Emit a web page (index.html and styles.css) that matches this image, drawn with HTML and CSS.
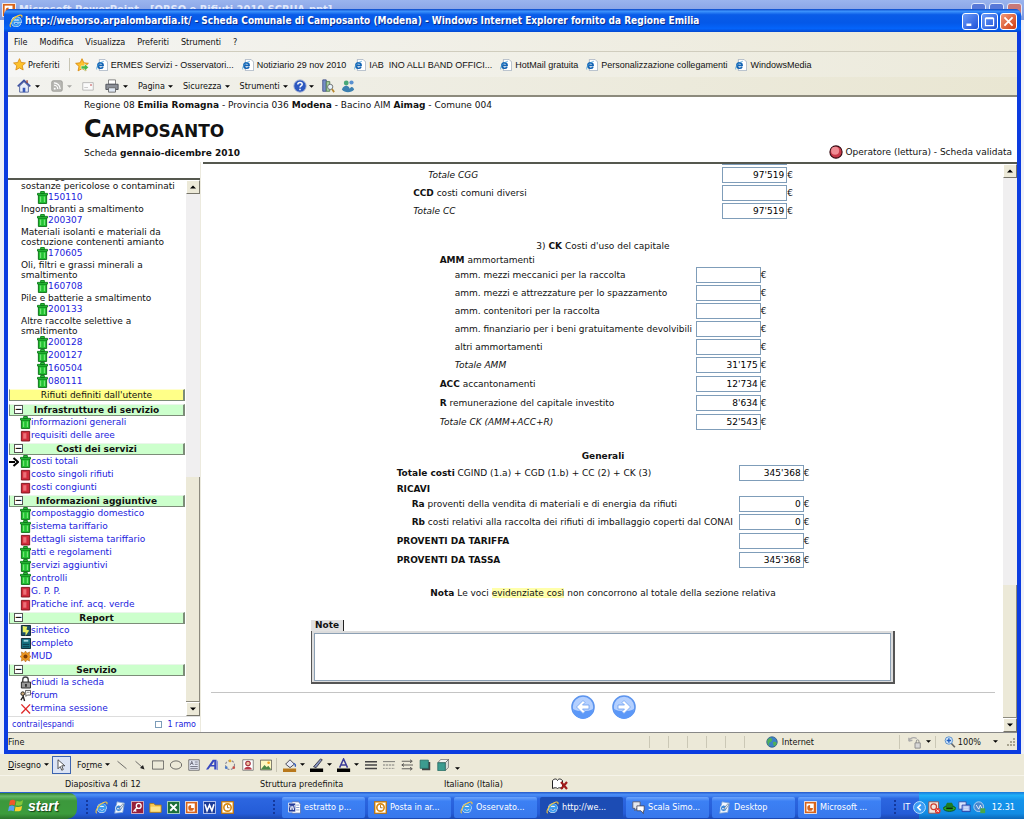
FILE: index.html
```html
<!DOCTYPE html>
<html lang="it">
<head>
<meta charset="utf-8">
<title>Scheda Comunale di Camposanto (Modena)</title>
<link rel="stylesheet" href="styles.css">
</head>
<body>
<svg class="defs" aria-hidden="true">
  <symbol id="ie" viewBox="0 0 16 16"><path d="M4.500 8.500h8.300c0-5-8.600-5.500-8.600.5 0 5 6.500 5.200 8.200 1.500" fill="none" stroke="#fff" stroke-width="3.400"/><path d="M4.500 8.500h8.300c0-5-8.600-5.500-8.600.5 0 5 6.500 5.200 8.200 1.500" fill="none" stroke="#3c9cf0" stroke-width="2.400"/><path d="M2 15C-1 13 5 3 12.500 1.300c2.500-.3 2.700.8 2 2.700" fill="none" stroke="#f8c838" stroke-width="1.300"/></symbol>
  <symbol id="iepage" viewBox="0 0 16 16"><path d="M4.500.5h7.500l3.500 3.500v11.500h-11z" fill="#fff" stroke="#9aa7b8"/><path d="M3 8.500h6.500c0-4.500-7-4.500-7 .5 0 4 5.500 4.200 6.800 1.500" fill="none" stroke="#1464b4" stroke-width="2.200"/><path d="M1 14C-.5 11 5 4 10.500 3" fill="none" stroke="#4aa0d8"/></symbol>
  <symbol id="star" viewBox="0 0 16 16"><path d="M8 .8l2.100 4.700 5.200.6-3.900 3.500 1.100 5.100L8 12.200l-4.500 2.500 1.100-5.100L.7 6.100l5.200-.6z" fill="#fdc22d" stroke="#d98a10"/></symbol>
  <symbol id="caret" viewBox="0 0 8 8"><path d="M0 2h8L4 6z" fill="#000"/></symbol>
  <symbol id="bin" viewBox="0 0 12 14"><path d="M1.500 4h9v9.500h-9z" fill="#22c232" stroke="#0a6a14"/><path d="M.5 2.500h11v1.800H.5zM4 .5h4v2H4z" fill="#3ada48" stroke="#0a7a18"/><path d="M4 6v6M8 6v6" stroke="#8df08d"/></symbol>
  <symbol id="redbin" viewBox="0 0 12 14"><path d="M1.500 2.500h9v10.500h-9z" fill="#d02c3c" stroke="#7c1018"/><path d="M3.500 4.500h3.500v6H3.500z" fill="#ec7078"/></symbol>
  <symbol id="ppt" viewBox="0 0 16 16"><path d="M.5.5h15v15H.5z" fill="#d8641c" stroke="#fff"/><path d="M3 3h9v10H3z" fill="#fff"/><path d="M7.500 5v3.500H11A3.500 3.500 0 1 1 7.500 5z" fill="#d8641c"/></symbol>
  <symbol id="outlook" viewBox="0 0 16 16"><path d="M.5.5h15v15H.5z" fill="#f0a830" stroke="#b86c08"/><path d="M2 2h12v12H2z" fill="#fff"/><circle cx="8" cy="8" r="4.500" fill="#fff" stroke="#d88810" stroke-width="2"/><path d="M8 5v3.300h2.500" fill="none" stroke="#a05c00"/></symbol>
  <symbol id="word" viewBox="0 0 16 16"><path d="M.5.5h15v15H.5z" fill="#1c3c98" stroke="#dfe6ff"/><path d="M2.500 4l2.500 8 3-7 3 7 2.500-8" fill="none" stroke="#fff" stroke-width="2"/></symbol>
  <symbol id="wordpage" viewBox="0 0 16 16"><path d="M5 1h8l2.500 3v11H5z" fill="#fff" stroke="#5068a8"/><path d="M9 5h5M9 8h5M9 11h5" stroke="#7088c0"/><path d="M.5 2.500h9v11h-9z" fill="#243c98" stroke="#fff"/><path d="M2 5l1.500 6L5 6l1.500 5L8 5" fill="none" stroke="#fff"/></symbol>
  <symbol id="desk" viewBox="0 0 16 16"><path d="M5 1l9 1.500L12 14l-10 1z" fill="#f4f8ff" stroke="#7aa0d0"/><circle cx="7" cy="9" r="4" fill="#3c88d8" stroke="#fff"/><path d="M5 9.500h4.500" stroke="#fff" stroke-width="1.200"/><path d="M7.500 9L12 3.500l1.500 1L9.500 10z" fill="#e8f0fa" stroke="#385880" stroke-width=".7"/></symbol>
  <symbol id="chat" viewBox="0 0 16 16"><path d="M1 1h9v8H6l-2.500 3V9H1z" fill="#e4e8ee" stroke="#556"/><path d="M6 6h9v6h-1v3.500L11 12H6z" fill="#fff" stroke="#445"/></symbol>
  <symbol id="arrowball" viewBox="0 0 24 24"><circle cx="12" cy="12" r="11" fill="#b4d0ff" stroke="#5c94ee" stroke-width="1.600"/><path d="M2 14a10 10 0 0 0 20 0c-5 3-15 3-20 0z" fill="#5c98f8"/><path d="M5.500 12l6.500-6.500 2 2L11.500 10H18v4h-6.500l2.500 2.500-2 2z" fill="#fff" stroke="#6da0f0" stroke-width=".8"/></symbol>
</svg>

<div class="desktop">
  <div class="workspace">
    <div class="back-title"><svg class="ico14"><use href="#ppt"/></svg><span>Microsoft PowerPoint - [ORSO e Rifiuti 2010 SCRUA.ppt]</span>
      <i class="bk"></i><i class="bk"></i><i class="bk bk-x"></i></div>

    <section class="window">
      <header class="titlebar">
        <svg class="ico14"><use href="#ie"/></svg>
        <h1>http://weborso.arpalombardia.it/ - Scheda Comunale di Camposanto (Modena) - Windows Internet Explorer fornito da Regione Emilia</h1>
        <button class="wb" aria-label="Riduci"><svg viewBox="0 0 16 16"><path d="M3 12h6" stroke="#fff" stroke-width="3"/></svg></button>
        <button class="wb" aria-label="Ingrandisci"><svg viewBox="0 0 16 16"><path d="M3 4.500h10V13H3zM3 3.500h10" fill="none" stroke="#fff" stroke-width="1.500"/></svg></button>
        <button class="wb close" aria-label="Chiudi"><svg viewBox="0 0 16 16"><path d="M3 3l10 10M13 3L3 13" stroke="#fff" stroke-width="2.200"/></svg></button>
      </header>

      <nav class="menubar">
        <button>File</button><button>Modifica</button><button>Visualizza</button><button>Preferiti</button><button>Strumenti</button><button>?</button>
      </nav>

      <nav class="favbar">
        <button class="fav-main"><svg class="ico13"><use href="#star"/></svg>Preferiti</button>
        <button class="fav-add" aria-label="Aggiungi a Preferiti"><svg class="ico14" viewBox="0 0 16 16"><use href="#star"/><path d="M7 9h4V6.500l4.500 4.200L11 15v-2.500H7z" fill="#48b848" stroke="#fff" stroke-width=".6"/></svg></button>
        <a href="#"><svg class="ico12"><use href="#iepage"/></svg>ERMES Servizi - Osservatori...</a>
        <a href="#"><svg class="ico12"><use href="#iepage"/></svg>Notiziario 29 nov 2010</a>
        <a href="#"><svg class="ico12"><use href="#iepage"/></svg>IAB&nbsp; INO ALLI BAND OFFICI...</a>
        <a href="#"><svg class="ico12"><use href="#iepage"/></svg>HotMail gratuita</a>
        <a href="#"><svg class="ico12"><use href="#iepage"/></svg>Personalizzazione collegamenti</a>
        <a href="#"><svg class="ico12"><use href="#iepage"/></svg>WindowsMedia</a>
      </nav>

      <nav class="cmdbar">
        <button aria-label="Home"><svg class="ico14" viewBox="0 0 16 16"><path d="M3 8v7h10V8L8 3z" fill="#e8ecf8" stroke="#4a5c98"/><path d="M.8 8.500L8 1.500l7.200 7" fill="none" stroke="#3c50a0" stroke-width="1.800"/><path d="M6.500 10h3v5h-3z" fill="#3858b8"/><path d="M11.500 1.500v3" stroke="#a04030" stroke-width="1.500"/></svg><svg class="car"><use href="#caret"/></svg></button>
        <button class="c-rss" aria-label="Feed"><svg class="ico12" viewBox="0 0 16 16"><rect x="1" y="1" width="14" height="14" rx="2" fill="#b8b8b4" stroke="#92928e"/><path d="M4 7a5 5 0 0 1 5 5M4 3.800A8.200 8.200 0 0 1 12.200 12" fill="none" stroke="#fff" stroke-width="1.600"/><circle cx="5" cy="11.500" r="1.300" fill="#fff"/></svg><svg class="car dim"><use href="#caret"/></svg></button>
        <button class="c-mail" aria-label="Posta"><svg class="ico12" viewBox="0 0 16 16"><path d="M1 3.500h14v10H1z" fill="#fafafa" stroke="#a8a8a8"/><path d="M11 5.500h2v2h-2z" fill="#c86060"/><path d="M3 10h5" stroke="#bbb"/></svg></button>
        <button aria-label="Stampa"><svg class="ico14" viewBox="0 0 16 16"><path d="M4 1h8v5H4z" fill="#fff" stroke="#777"/><path d="M1 6h14v6H1z" fill="#8c9098" stroke="#484c54"/><path d="M4 10h8v5H4z" fill="#dfe8f4" stroke="#666"/></svg><svg class="car"><use href="#caret"/></svg></button>
        <button class="c-txt">Pagina<svg class="car"><use href="#caret"/></svg></button>
        <button class="c-txt">Sicurezza<svg class="car"><use href="#caret"/></svg></button>
        <button class="c-txt">Strumenti<svg class="car"><use href="#caret"/></svg></button>
        <button class="c-help" aria-label="Guida"><svg class="ico14" viewBox="0 0 16 16"><circle cx="8" cy="8" r="7" fill="#2c58c0" stroke="#98a8d0"/><path d="M5.500 6.200c0-3 5-3 5-.2 0 1.800-2.500 1.800-2.500 3.600M8 11v1.800" fill="none" stroke="#fff" stroke-width="1.700"/></svg><svg class="car"><use href="#caret"/></svg></button>
        <button class="c-ref" aria-label="Ricerche"><svg class="ico14" viewBox="0 0 16 16"><path d="M2 1h4v13H2z" fill="#7890c8" stroke="#405088"/><path d="M6 3h4v11H6z" fill="#a8d0a0" stroke="#507850"/><circle cx="10.500" cy="9" r="3" fill="#e8f4fc" stroke="#666"/><path d="M12.500 11.500L15 15" stroke="#b88830" stroke-width="2"/></svg></button>
        <button aria-label="Messenger"><svg class="ico14" viewBox="0 0 16 16"><circle cx="6" cy="4.500" r="2.800" fill="#48a878"/><circle cx="12" cy="4" r="2.400" fill="#5890d0"/><path d="M1 12c2-6 8-5 9-1 2-3 4-2 5 1-3 4-11 4-14 0z" fill="#3c80b0"/></svg></button>
      </nav>

      <div class="page">
        <header class="page-head">
          <div>
            <p>Regione 08 <b>Emilia Romagna</b> - Provincia 036 <b>Modena</b> - Bacino AIM <b>Aimag</b> - Comune 004</p>
            <h2>Camposanto</h2>
            <p>Scheda <b>gennaio-dicembre 2010</b></p>
          </div>
          <p class="operator"><svg class="ico14" viewBox="0 0 16 16"><circle cx="8" cy="8" r="7" fill="#c83848" stroke="#300810" stroke-width="1.200"/><circle cx="7" cy="6.500" r="4.600" fill="#f08c94"/></svg>Operatore (lettura) - Scheda validata</p>
        </header>

        <div class="frames">
          <aside class="side">
            <div class="side-scroll">
              <div class="tree">
                <p class="kind cut">Imballaggi contenenti<br>sostanze pericolose o contaminati</p>
                <a class="code" href="#"><svg class="bin"><use href="#bin"/></svg>150110</a>
                <p class="kind">Ingombranti a smaltimento</p>
                <a class="code" href="#"><svg class="bin"><use href="#bin"/></svg>200307</a>
                <p class="kind">Materiali isolanti e materiali da costruzione contenenti amianto</p>
                <a class="code" href="#"><svg class="bin"><use href="#bin"/></svg>170605</a>
                <p class="kind">Oli, filtri e grassi minerali a<br>smaltimento</p>
                <a class="code" href="#"><svg class="bin"><use href="#bin"/></svg>160708</a>
                <p class="kind">Pile e batterie a smaltimento</p>
                <a class="code" href="#"><svg class="bin"><use href="#bin"/></svg>200133</a>
                <p class="kind">Altre raccolte selettive a<br>smaltimento</p>
                <a class="code" href="#"><svg class="bin"><use href="#bin"/></svg>200128</a>
                <a class="code" href="#"><svg class="bin"><use href="#bin"/></svg>200127</a>
                <a class="code" href="#"><svg class="bin"><use href="#bin"/></svg>160504</a>
                <a class="code" href="#"><svg class="bin"><use href="#bin"/></svg>080111</a>
                <p class="bar user">Rifiuti definiti dall'utente</p>

                <h3 class="bar"><button class="fold" aria-label="Comprimi">−</button>Infrastrutture di servizio</h3>
                <a class="item" href="#"><svg class="bin"><use href="#bin"/></svg>informazioni generali</a>
                <a class="item" href="#"><svg class="bin"><use href="#redbin"/></svg>requisiti delle aree</a>

                <h3 class="bar"><button class="fold" aria-label="Comprimi">−</button>Costi dei servizi</h3>
                <a class="item current" href="#"><svg class="here" viewBox="0 0 10 10"><path d="M0 5h6" stroke="#000" stroke-width="2"/><path d="M4.500 1L9 5 4.500 9" fill="none" stroke="#000" stroke-width="2"/></svg><svg class="bin"><use href="#bin"/></svg>costi totali</a>
                <a class="item" href="#"><svg class="bin"><use href="#redbin"/></svg>costo singoli rifiuti</a>
                <a class="item" href="#"><svg class="bin"><use href="#redbin"/></svg>costi congiunti</a>

                <h3 class="bar"><button class="fold" aria-label="Comprimi">−</button>Informazioni aggiuntive</h3>
                <a class="item" href="#"><svg class="bin"><use href="#bin"/></svg>compostaggio domestico</a>
                <a class="item" href="#"><svg class="bin"><use href="#bin"/></svg>sistema tariffario</a>
                <a class="item" href="#"><svg class="bin"><use href="#redbin"/></svg>dettagli sistema tariffario</a>
                <a class="item" href="#"><svg class="bin"><use href="#bin"/></svg>atti e regolamenti</a>
                <a class="item" href="#"><svg class="bin"><use href="#bin"/></svg>servizi aggiuntivi</a>
                <a class="item" href="#"><svg class="bin"><use href="#bin"/></svg>controlli</a>
                <a class="item" href="#"><svg class="bin"><use href="#redbin"/></svg>G. P. P.</a>
                <a class="item" href="#"><svg class="bin"><use href="#redbin"/></svg>Pratiche inf. acq. verde</a>

                <h3 class="bar"><button class="fold" aria-label="Comprimi">−</button>Report</h3>
                <a class="item" href="#"><svg class="bin" viewBox="0 0 12 14"><path d="M1.500 1.500h10v11h-10z" fill="#1c5068" stroke="#08202c"/><path d="M3 2l5 1-1 3 3 1-4 6 0-4-3 0z" fill="#e8f060"/></svg>sintetico</a>
                <a class="item" href="#"><svg class="bin" viewBox="0 0 12 14"><path d="M1.500 1.500h10v11h-10z" fill="#187080" stroke="#08202c"/><path d="M4 3h5v2H4z" fill="#a8d8e0"/><path d="M3 8h7M3 10.500h7" stroke="#0c3848"/></svg>completo</a>
                <a class="item" href="#"><svg class="bin" viewBox="0 0 12 14"><path d="M6 1l1.500 2.500L10.500 2l-.5 3.500 2 1.500-2 1.500.5 3.500-3-1.500L6 13l-1.500-2.500-3 1.500.5-3.500L0 7l2-1.500L1.500 2l3 1.500z" fill="#f09820" stroke="#a86010" stroke-width=".6"/><circle cx="6" cy="7" r="2.200" fill="#7c3c08"/></svg>MUD</a>

                <h3 class="bar"><button class="fold" aria-label="Comprimi">−</button>Servizio</h3>
                <a class="item" href="#"><svg class="bin" viewBox="0 0 12 14"><path d="M3 7V4a3 3 0 0 1 6 0v3" fill="none" stroke="#444" stroke-width="1.500"/><path d="M1.500 6.500h10v6.500h-10z" fill="#989898" stroke="#222"/><path d="M6.500 8.500v3" stroke="#111" stroke-width="1.500"/></svg>chiudi la scheda</a>
                <a class="item" href="#"><svg class="bin" viewBox="0 0 12 14"><circle cx="3" cy="5" r="2" fill="#caa878" stroke="#222"/><path d="M1 12l2.500-4 1.500 5" fill="none" stroke="#222" stroke-width="1.500"/><path d="M6 1.500h5.500v5H8L6.500 8z" fill="#fff" stroke="#555"/><path d="M7.500 3.500h3" stroke="#888"/></svg>forum</a>
                <a class="item" href="#"><svg class="bin" viewBox="0 0 12 14"><path d="M1.500 2.500l9.500 10M11 2.500L1.500 12.500" stroke="#e02828" stroke-width="1.500"/></svg>termina sessione</a>
              </div>
              <div class="vscroll side-v"><button aria-label="Su"><svg viewBox="0 0 8 8"><path d="M0 6h8L4 2z"/></svg></button><i class="track"></i><i class="thumb"></i><button aria-label="Giù"><svg viewBox="0 0 8 8"><path d="M0 2h8L4 6z"/></svg></button></div>
            </div>
            <div class="side-foot"><a href="#">contrai</a>|<a href="#">espandi</a><label><input type="checkbox">1 ramo</label></div>
          </aside>

          <main class="main">
            <form class="sheet">
              <table class="t-cc">
                <tr><td></td><td><input class="num" aria-label="Voce precedente"></td></tr>
                <tr><td class="in1"><label for="cgg"><i>Totale CGG</i></label></td><td><input class="num" id="cgg" value="97'519">€</td></tr>
                <tr><td><label for="ccd"><b>CCD</b> costi comuni diversi</label></td><td><input class="num" id="ccd">€</td></tr>
                <tr><td><label for="cc"><i>Totale CC</i></label></td><td><input class="num" id="cc" value="97'519">€</td></tr>
              </table>
              <table class="t-ck">
                <caption>3) <b>CK</b> Costi d'uso del capitale</caption>
                <tr class="plain"><td colspan="2"><b>AMM</b> ammortamenti</td></tr>
                <tr class="sub"><td><label for="a1">amm. mezzi meccanici per la raccolta</label></td><td><input class="num" id="a1">€</td></tr>
                <tr class="sub"><td><label for="a2">amm. mezzi e attrezzature per lo spazzamento</label></td><td><input class="num" id="a2">€</td></tr>
                <tr class="sub"><td><label for="a3">amm. contenitori per la raccolta</label></td><td><input class="num" id="a3">€</td></tr>
                <tr class="sub"><td><label for="a4">amm. finanziario per i beni gratuitamente devolvibili</label></td><td><input class="num" id="a4">€</td></tr>
                <tr class="sub"><td><label for="a5">altri ammortamenti</label></td><td><input class="num" id="a5">€</td></tr>
                <tr class="sub"><td><label for="a6"><i>Totale AMM</i></label></td><td><input class="num" id="a6" value="31'175">€</td></tr>
                <tr><td><label for="acc"><b>ACC</b> accantonamenti</label></td><td><input class="num" id="acc" value="12'734">€</td></tr>
                <tr><td><label for="r"><b>R</b> remunerazione del capitale investito</label></td><td><input class="num" id="r" value="8'634">€</td></tr>
                <tr><td><label for="ck"><i>Totale CK (AMM+ACC+R)</i></label></td><td><input class="num" id="ck" value="52'543">€</td></tr>
              </table>
              <table class="t-gen">
                <caption><b>Generali</b></caption>
                <tr><td><label for="tot"><b>Totale costi</b> CGIND (1.a) + CGD (1.b) + CC (2) + CK (3)</label></td><td><input class="num" id="tot" value="345'368">€</td></tr>
                <tr class="plain"><td colspan="2"><b>RICAVI</b></td></tr>
                <tr class="sub"><td><label for="ra"><b>Ra</b> proventi della vendita di materiali e di energia da rifiuti</label></td><td><input class="num" id="ra" value="0">€</td></tr>
                <tr class="sub"><td><label for="rb"><b>Rb</b> costi relativi alla raccolta dei rifiuti di imballaggio coperti dal CONAI</label></td><td><input class="num" id="rb" value="0">€</td></tr>
                <tr><td><label for="tar"><b>PROVENTI DA TARIFFA</b></label></td><td><input class="num" id="tar">€</td></tr>
                <tr><td><label for="tas"><b>PROVENTI DA TASSA</b></label></td><td><input class="num" id="tas" value="345'368">€</td></tr>
              </table>
              <p class="nota"><b>Nota</b> Le voci <mark>evidenziate così</mark> non concorrono al totale della sezione relativa</p>
              <div class="note"><label for="note">Note</label><div class="note-box"><textarea id="note"></textarea></div></div>
              <hr>
              <div class="pager">
                <button type="button" aria-label="Indietro"><svg><use href="#arrowball"/></svg></button>
                <button type="button" aria-label="Avanti"><svg class="flip"><use href="#arrowball"/></svg></button>
              </div>
            </form>
            <div class="vscroll main-v"><button aria-label="Su"><svg viewBox="0 0 8 8"><path d="M0 6h8L4 2z"/></svg></button><i class="track"></i><i class="thumb"></i><button aria-label="Giù"><svg viewBox="0 0 8 8"><path d="M0 2h8L4 6z"/></svg></button></div>
          </main>
        </div>
      </div>

      <footer class="statusbar">
        <span class="msg">Fine</span>
        <i></i><i></i><i></i><i></i><i></i><i></i>
        <span class="zone"><svg class="ico12" viewBox="0 0 16 16"><circle cx="8" cy="8" r="7" fill="#3c80c8" stroke="#285880"/><path d="M3 4c3-3 6-1 5 2s-4 2-4 4 1 3 0 3C1 10 1 6 3 4zM10 8c3-1 5 0 4 3-2 3-4 3-4 1s-2-3 0-4z" fill="#50b058"/></svg>Internet</span>
        <button class="prot" aria-label="Protezione"><svg class="ico14" viewBox="0 0 16 16"><path d="M1 7c1-4 6-5 9-3M1 7l4-1M1 7L1 3" fill="none" stroke="#aaa" stroke-width="1.500"/><path d="M8 9h6v6H8z" fill="#d8d8d8" stroke="#888"/><path d="M9.500 9V7a1.500 1.500 0 0 1 3 0v2" fill="none" stroke="#888"/></svg><svg class="car"><use href="#caret"/></svg></button>
        <button class="zoom"><svg class="ico12" viewBox="0 0 16 16"><path d="M9 9l5.500 6" stroke="#666" stroke-width="2.200"/><circle cx="6.500" cy="6" r="5" fill="#d4e8fc" stroke="#3878c0"/><path d="M3.500 6h6M6.500 3v6" stroke="#2060c0" stroke-width="1.800"/></svg>100%<svg class="car"><use href="#caret"/></svg></button>
        <svg class="grip" viewBox="0 0 10 10"><path d="M8 1v2M8 4v2M8 7v2M5 4v2M5 7v2M2 7v2" stroke="#a8a490" stroke-width="2"/></svg>
      </footer>
    </section>
  </div>

  <nav class="drawbar">
    <button><span><u>D</u>isegno</span><svg class="car"><use href="#caret"/></svg></button>
    <button class="on" aria-label="Seleziona"><svg class="ico12" viewBox="0 0 16 16"><path d="M4 1v12l3-3 2 5 2-1-2-5h4z" fill="#fff" stroke="#222"/></svg></button>
    <button class="forme"><span>Fo<u>r</u>me</span><svg class="car"><use href="#caret"/></svg></button>
    <span class="tools">
      <button aria-label="Linea"><svg viewBox="0 0 16 16"><path d="M2 3l12 10" stroke="#444"/></svg></button>
      <button aria-label="Freccia"><svg viewBox="0 0 16 16"><path d="M2 3l9 8" stroke="#444"/><path d="M14 14l-6-2 4-4z" fill="#222"/></svg></button>
      <button aria-label="Rettangolo"><svg viewBox="0 0 16 16"><path d="M.5 2.500h15v11H.5z" fill="none" stroke="#444"/></svg></button>
      <button aria-label="Ovale"><svg viewBox="0 0 16 16"><ellipse cx="8" cy="8" rx="7.500" ry="5.500" fill="none" stroke="#444"/></svg></button>
      <button aria-label="Casella di testo"><svg viewBox="0 0 16 16"><path d="M1 1h14v14H1z" fill="#e4e8f4" stroke="#555"/><path d="M3 8l2-5 2 5M4 6h2M9 4h4M9 7h4M3 10h10M3 12.500h10" fill="none" stroke="#556"/></svg></button>
      <button aria-label="WordArt"><svg viewBox="0 0 16 16"><path d="M0 14L9 1h5v13h-3v-4H6l-3 4zM7.500 8H11V3z" fill="#3848c0"/><path d="M14 1l2 2v12l-2-1z" fill="#8890d8"/></svg></button>
      <button aria-label="Diagramma"><svg viewBox="0 0 16 16"><circle cx="8" cy="8" r="6" fill="none" stroke="#889" stroke-dasharray="3 2" stroke-width="1.500"/><circle cx="8" cy="2.500" r="1.800" fill="#e0a830"/><circle cx="3" cy="11.500" r="1.800" fill="#4878c8"/><circle cx="13" cy="11.500" r="1.800" fill="#c85048"/></svg></button>
      <button aria-label="ClipArt"><svg viewBox="0 0 16 16"><path d="M1 1h14v14H1z" fill="#fff" stroke="#666"/><circle cx="8" cy="6" r="3" fill="#f0c0a0" stroke="#a02838" stroke-width="1.400"/><path d="M3 14c0-5 10-5 10 0z" fill="#b83848"/></svg></button>
      <button aria-label="Immagine"><svg viewBox="0 0 16 16"><path d="M.5 1.500h15v13H.5z" fill="#fff8c0" stroke="#444"/><path d="M1 14l5-6 3 3 2-2 4 5z" fill="#4c8848"/><circle cx="11.500" cy="5" r="1.800" fill="#f0a020"/></svg></button>
    </span>
    <span class="inks">
      <button aria-label="Riempimento"><svg class="ico14" viewBox="0 0 16 16"><path d="M3 7l5-5 5 5-5 4z" fill="#e8ecf8" stroke="#334"/><path d="M12 6c3 1 2 4 2 4" fill="none" stroke="#3860c0" stroke-width="1.500"/><path d="M0 12h15v4H0z" fill="#b8781c"/></svg><svg class="car"><use href="#caret"/></svg></button>
      <button aria-label="Colore linea"><svg class="ico14" viewBox="0 0 16 16"><path d="M4 10l8-9 2 1-7 9z" fill="#8894c0" stroke="#334"/><path d="M0 12h15v4H0z" fill="#000"/></svg><svg class="car"><use href="#caret"/></svg></button>
      <button aria-label="Colore carattere"><svg class="ico14" viewBox="0 0 16 16"><path d="M3 11L7.500 1 12 11M4.500 8h6" fill="none" stroke="#3c3c98" stroke-width="1.700"/><path d="M0 12h15v4H0z" fill="#000"/></svg><svg class="car"><use href="#caret"/></svg></button>
    </span>
    <span class="tools">
      <button aria-label="Stile linea"><svg viewBox="0 0 16 16"><path d="M0 3.500h16M0 8h16M0 12.500h16" stroke="#444" stroke-width="2"/></svg></button>
      <button aria-label="Tratteggio"><svg viewBox="0 0 16 16"><path d="M0 3.500h16" stroke="#555"/><path d="M0 8h16" stroke="#555" stroke-dasharray="3 1"/><path d="M0 12.500h16" stroke="#555" stroke-dasharray="1 1"/></svg></button>
      <button aria-label="Frecce"><svg viewBox="0 0 16 16"><path d="M1 3h13M2 8h14M1 13h13M12 1l3 2-3 2M4 6L1 8l3 2M12 11l3 2-3 2" fill="none" stroke="#333"/></svg></button>
      <button aria-label="Ombreggiatura"><svg viewBox="0 0 16 16"><path d="M4 4h11v11H4z" fill="#444"/><path d="M1.500 1.500h11v11h-11z" fill="#3c9c90" stroke="#246860"/></svg></button>
      <button aria-label="3D"><svg viewBox="0 0 16 16"><path d="M1 5l4-4.500h10.500L11 5z" fill="#f4f4f0" stroke="#666"/><path d="M11 5l4.500-4.500V11L11 15.500z" fill="#d8dcd8" stroke="#666"/><path d="M1 5h10v10.500H1z" fill="#3c9c90" stroke="#246860"/></svg></button>
    </span>
    <svg class="car low"><use href="#caret"/></svg>
  </nav>
  <div class="slidebar"><span>Diapositiva 4 di 12</span><span>Struttura predefinita</span><span>Italiano (Italia)</span><svg viewBox="0 0 16 12"><path d="M.5 2.500c2-2 4-2 5 0 1-2 3-2 5 0v8c-2-1-4-1-5 0-1-1-3-1-5 0z" fill="#fff" stroke="#222"/><path d="M9 4l6 7M15 4l-6 7" stroke="#a01c1c" stroke-width="2.200"/></svg></div>

  <nav class="taskbar">
    <button class="start"><svg viewBox="0 0 18 16"><path d="M2 3c3-2 4-1 6 0L7 8C5 7 4 7 1 8z" fill="#f0582c"/><path d="M9 3c3 1 4 1 7-1l-1 5c-3 2-5 1-7 1z" fill="#84c83c"/><path d="M1 9c3-1.500 4-1 6 0l-1 5c-2-1-4-1-6 0z" fill="#58a0f4"/><path d="M8 9c2 1 4 1 7-.5L14 13c-3 2-5 1-7 1z" fill="#fcd030"/></svg>start</button>
    <i class="dots"></i>
    <span class="quick">
      <button aria-label="Internet Explorer"><svg><use href="#ie"/></svg></button>
      <button aria-label="Mostra desktop"><svg><use href="#desk"/></svg></button>
      <button aria-label="Access"><svg viewBox="0 0 16 16"><path d="M.5.500h15v15H.5z" fill="#98203c" stroke="#f0d0d8"/><circle cx="9.500" cy="6" r="3" fill="none" stroke="#fff" stroke-width="1.600"/><path d="M7.500 8L3 13M4.500 11l2 2" stroke="#fff" stroke-width="1.600"/></svg></button>
      <button aria-label="Cartella"><svg viewBox="0 0 16 16"><path d="M1 3h5l1.500 2H15v9H1z" fill="#f8c850" stroke="#a87818"/><path d="M2 7h12v6H2z" fill="#fce48c"/></svg></button>
      <button aria-label="Excel"><svg viewBox="0 0 16 16"><path d="M.5.500h15v15H.5z" fill="#1c7038" stroke="#d0f0d8"/><path d="M4 4l8 8M12 4l-8 8" stroke="#fff" stroke-width="2.200"/></svg></button>
      <button aria-label="PowerPoint"><svg><use href="#ppt"/></svg></button>
      <button aria-label="Word"><svg><use href="#word"/></svg></button>
      <button aria-label="Outlook"><svg><use href="#outlook"/></svg></button>
    </span>
    <i class="dots"></i>
    <span class="tasks">
      <button><svg><use href="#wordpage"/></svg>estratto p...</button>
      <button><svg><use href="#outlook"/></svg>Posta in ar...</button>
      <button><svg><use href="#ie"/></svg>Osservato...</button>
      <button class="active"><svg><use href="#ie"/></svg>http://we...</button>
      <button><svg><use href="#chat"/></svg>Scala Simo...</button>
      <button><svg><use href="#desk"/></svg>Desktop</button>
      <button><svg><use href="#ppt"/></svg>Microsoft ...</button>
    </span>
    <i class="dots"></i>
    <span class="lang">IT</span>
    <div class="tray">
      <button class="chev" aria-label="Mostra icone"><svg viewBox="0 0 16 16"><circle cx="8" cy="8" r="7.300" fill="#3c9cf4" stroke="#d0ecff"/><path d="M9.500 4.500L6 8l3.500 3.500" fill="none" stroke="#fff" stroke-width="2"/></svg></button>
      <svg viewBox="0 0 16 16"><path d="M1 1h12v14H1z" fill="#f0e8e0" stroke="#a04838"/><circle cx="7" cy="7" r="3.500" fill="none" stroke="#d04030" stroke-width="1.500"/><circle cx="12" cy="12" r="3.500" fill="#e03830"/><path d="M10.500 10.500l3 3M13.500 10.500l-3 3" stroke="#fff"/></svg>
      <svg viewBox="0 0 16 16"><path d="M0 9c2-4 14-4 16 0-2 5-14 5-16 0z" fill="#28a028" stroke="#084808"/><path d="M5 2h6l2 4H3z" fill="#207c20"/><path d="M4 9h8" stroke="#082808" stroke-width="2"/></svg>
      <svg viewBox="0 0 16 16"><path d="M1 1h9v9H1z" fill="#d8e4fc" stroke="#3048a0"/><path d="M5 5h10v8H5z" fill="#a0b8f0" stroke="#2038a0"/><path d="M7 7.500h6M7 10h6" stroke="#fff"/></svg>
      <svg viewBox="0 0 16 16"><circle cx="7" cy="7" r="6" fill="#4888d0" stroke="#c8e0f8"/><path d="M4 5l3 5 2-5 2 4" fill="none" stroke="#fff"/><path d="M9 9h6v6H9z" fill="#48a848"/></svg>
      <time>12.31</time>
    </div>
  </nav>
</div>
</body>
</html>
```

FILE: styles.css
```css
* { box-sizing: border-box; }
html, body { height: 100%; }
body {
  margin: 0;
  overflow: hidden;
  font: 9px/12px "DejaVu Sans", Verdana, sans-serif;
  color: #111;
}
h1, h2, h3, p { margin: 0; font-size: inherit; }
button {
  display: flex;
  align-items: center;
  margin: 0;
  padding: 0;
  border: 0;
  background: none;
  font: inherit;
  color: inherit;
  white-space: nowrap;
}
a { color: #2222dd; text-decoration: none; }
svg { flex: none; display: block; }
.defs { position: absolute; width: 0; height: 0; }
.ico12 { width: 12px; height: 12px; }
.ico13 { width: 13px; height: 13px; }
.ico14 { width: 14px; height: 14px; }
.car { width: 5px; height: 5px; margin-left: 4px; }
.dim { opacity: .3; }

.desktop { height: 100vh; display: flex; flex-direction: column; background: #ece9d8; }
.workspace {
  flex: 1;
  min-height: 0;
  position: relative;
  display: flex;
  padding: 9px 3px 0 4px;
  background: #eef0f8;
}
.back-title {
  position: absolute;
  inset: 0 0 auto 0;
  height: 20px;
  display: flex;
  gap: 3px;
  padding: 3px 2px 0;
  background: linear-gradient(#9ab4ee, #7a96e0);
  color: #e0e8fc;
  font: bold 11px/14px "DejaVu Sans Condensed", "Liberation Sans", sans-serif;
}
.back-title span { flex: 1; }
.bk { width: 15px; height: 14px; border: 1px solid #dfe7fb; border-radius: 3px; background: #5878d8; }
.bk-x { background: #c87878; }

/* Browser window */
.window {
  position: relative;
  flex: 1;
  min-width: 0;
  display: flex;
  flex-direction: column;
  border: solid #0c3ce0;
  border-width: 0 4px 4px;
  border-radius: 7px 7px 0 0;
  background: #ece9d8;
  font-family: "DejaVu Sans Condensed", Tahoma, "Liberation Sans", sans-serif;
}
.titlebar {
  height: 23px;
  flex: none;
  margin: 0 -4px;
  padding: 1px 4px 0 5px;
  display: flex;
  align-items: center;
  gap: 2px;
  border-radius: 6px 6px 0 0;
  background: linear-gradient(#0846c8, #3c92fc 10%, #0a5ce8 25%, #0458e8 60%, #0464fa 85%, #0448d0);
  color: #fff;
}
.titlebar h1 { flex: 1; font: bold 10px/14px "DejaVu Sans Condensed", "Liberation Sans", sans-serif; white-space: nowrap; text-shadow: 1px 1px 0 #0a2c8c; }
.wb { width: 17px; height: 17px; border: 1px solid #fff; border-radius: 3px; background: linear-gradient(135deg, #6c9cf8, #1c50d8); justify-content: center; }
.wb svg { width: 13px; height: 13px; }
.wb.close { background: linear-gradient(135deg, #f09878, #d03c10); }

.menubar, .favbar, .cmdbar { flex: none; display: flex; align-items: center; }
.menubar { height: 20px; padding-left: 6px; gap: 12px; background: linear-gradient(90deg, #f4f4f2, #ece9d8); border-bottom: 1px solid #d0cdbe; }
.favbar { height: 25px; padding: 0 5px; background: linear-gradient(90deg, #f6f6f4, #eceadb); }
.fav-main { gap: 2px; padding-right: 9px; border-right: 1px solid #c8c5b4; }
.fav-add { margin: 0 7px 0 5px; }
.favbar a { display: flex; align-items: center; gap: 3px; margin-right: 8px; color: #111; white-space: nowrap; font-family: "Liberation Sans", Arial, sans-serif; }
.cmdbar { height: 20px; padding-left: 9px; background: linear-gradient(90deg, #f2f2ee, #e9e6d2); border-bottom: 2px solid #8c8a7c; }
.c-rss { margin-left: 11px; }
.c-mail { margin: 0 11px 0 10px; }
.c-txt { margin-left: 10px; }
.c-help { margin-left: 5px; }
.cmdbar .c-txt .car { margin-left: 3px; }
.cmdbar .c-help .car { margin-left: 2px; }
.c-ref { margin: 0 6px 0 7px; }

/* Page */
.page { flex: 1; min-height: 0; display: flex; flex-direction: column; background: #fff; font-family: "DejaVu Sans", Verdana, sans-serif; border-bottom: 1px solid #888; }
.page-head { flex: none; height: 65px; display: flex; justify-content: space-between; align-items: flex-end; padding: 0 5px 3px 76px; }
.page-head h2 { margin: 6px 0 6px; font-size: 24px; line-height: 24px; font-variant: small-caps; }
.operator { display: flex; align-items: center; gap: 2px; }
.frames { flex: 1; min-height: 0; display: flex; gap: 2px; }
.side { width: 193px; flex: none; display: flex; flex-direction: column; padding-top: 16px; border-right: 1px solid #eceade; }
.side-scroll { flex: 1; min-height: 0; display: flex; border-top: 2px solid #55584f; }
.tree { flex: 1; min-width: 0; overflow: hidden; }
.kind { padding: 0 6px 0 13px; line-height: 10px; }
.cut { margin-top: -9px; white-space: nowrap; }
.code, .item { display: flex; align-items: center; height: 13px; line-height: 13px; }
.code { padding-left: 29px; }
.item { padding-left: 12px; }
.current { padding-left: 1px; }
.here { width: 10px; height: 10px; margin-right: 1px; }
.bin { width: 11px; height: 13px; }
.bar {
  position: relative;
  height: 12px;
  margin: 1px 1px 0 1px;
  border: 1px solid #7c8c78;
  border-top-color: #eaf6ea;
  border-width: 1px 2px 1px 1px;
  background: #ccffcc;
  font-weight: bold;
  line-height: 10px;
  text-align: center;
}
.bar.user { background: #ffff88; border-top-color: #ffffd0; font-weight: normal; margin-bottom: 3px; }
.fold { position: absolute; left: 4px; top: 0; width: 9px; height: 9px; border: 1px solid #555; background: #fff; justify-content: center; line-height: 7px; }
.side-foot { height: 16px; flex: none; display: flex; align-items: center; padding: 0 4px; font-size: 8px; color: #2222dd; border-top: 1px solid #ddd; }
.side-foot label { margin-left: auto; display: flex; align-items: center; gap: 5px; }
.side-foot input { appearance: none; width: 7px; height: 7px; margin: 0; border: 1px solid #7c9cb8; background: #fff; }

.vscroll { flex: none; width: 14px; display: flex; flex-direction: column; background: #f0eff0; }
.vscroll button { width: 14px; height: 14px; justify-content: center; background: #ece9d8; border: 1px solid #fff; border-right-color: #77756a; border-bottom-color: #77756a; }
.vscroll svg { width: 6px; height: 6px; }
.thumb { background: #ece9d8; border-right: 1px solid #8c8a7e; border-bottom: 1px solid #8c8a7e; }
.side-v .track { flex: 284; }
.side-v .thumb { flex: 225; }
.main-v .track { flex: 408; }
.main-v .thumb { flex: 132; }

.main { flex: 1; min-width: 0; display: flex; border-top: 2px solid #55584f; }
.sheet { flex: 1; min-width: 0; overflow: hidden; display: flex; flex-direction: column; align-items: center; }
table { border-collapse: collapse; }
td { padding: 0; height: 19px; white-space: nowrap; vertical-align: middle; }
td + td { line-height: 15px; }
caption { height: 13px; line-height: 13px; }
.sub td, .t-cc td { height: 18px; }
.plain td { height: 13px; line-height: 12px; }
.in1, .sub td:first-child { padding-left: 15px; }
.num { width: 65px; height: 16px; margin: 0; padding: 0 2px; border: 1px solid #7f9db9; background: #fff; font: inherit; text-align: right; vertical-align: middle; }
.t-cc { margin-top: -16px; }
.t-cc td:first-child { width: 309px; }
.t-ck { margin-top: 20px; }
.t-ck td:first-child { width: 256px; }
.t-gen { margin-top: 19px; }
.t-gen td:first-child { width: 342px; }
.nota { margin-top: 18px; }
mark { background: #ffffaa; color: inherit; }
.note { width: 73%; margin-top: 20px; }
.note label { display: inline-block; padding: 0 4px; background: #e2e2e2; border-right: 1px solid #222; font-weight: bold; line-height: 11px; vertical-align: bottom; }
.note-box { display: flex; padding: 2px 2px 1px; background: #dcdcdc; border: solid #555; border-width: 0 2px 2px 1px; }
textarea { flex: 1; height: 48px; border: 1px solid #8ca0b4; resize: none; background: #fff; font: inherit; }
hr { width: 98%; height: 1px; margin: 8px 0 2px; border: 0; background: #c4c4c4; }
.pager { display: flex; gap: 17px; }
.pager svg { width: 24px; height: 24px; }
.flip { transform: scaleX(-1); }

.statusbar { flex: none; height: 17px; display: flex; align-items: center; padding-right: 1px; }
.statusbar > i { width: 19px; height: 12px; border-left: 1px solid #cbc8b6; }
.msg { flex: 1; }
.zone { display: flex; align-items: center; gap: 4px; width: 136px; padding-left: 3px; }
.prot { width: 36px; padding-left: 8px; border-left: 1px solid #cbc8b6; }
.zoom { padding-left: 8px; gap: 2px; border-left: 1px solid #cbc8b6; }
.zoom .car { margin-left: 10px; }
.grip { width: 10px; height: 10px; margin-left: 8px; }

/* Presentation toolbars */
.drawbar, .slidebar { flex: none; display: flex; align-items: center; font-family: "DejaVu Sans Condensed", Tahoma, "Liberation Sans", sans-serif; background: #ece9d8; }
.drawbar { height: 21px; padding-left: 8px; }
.drawbar .on { width: 19px; height: 18px; margin: 0 6px 0 3px; justify-content: center; border: 1px solid #3c64b0; background: #dce4f4; }
.drawbar .car { margin-left: 3px; }
.tools { display: flex; gap: 6px; }
.tools svg { width: 12px; height: 12px; }
.forme { margin-right: 6px; }
.inks { display: flex; gap: 5px; margin: 0 6px 0 4px; padding-left: 6px; border-left: 1px solid #c8c5b4; }
.inks .car { margin-left: 3px; }
.drawbar .low { margin: 8px 0 0 6px; }
.slidebar { height: 17px; border-top: 1px solid #f6f4ea; padding-left: 65px; }
.slidebar span:nth-child(1) { width: 195px; }
.slidebar span:nth-child(2) { width: 184px; }
.slidebar span:nth-child(3) { width: 108px; }
.slidebar svg { width: 16px; height: 12px; }

/* Taskbar */
.taskbar { flex: none; height: 27px; display: flex; align-items: center; background: linear-gradient(#2458c8, #4c90f8 10%, #2c66e0 25%, #245cd8 80%, #1c48b0); color: #fff; font-family: "DejaVu Sans Condensed", Tahoma, "Liberation Sans", sans-serif; }
.start { width: 77px; height: 26px; padding-left: 8px; gap: 3px; border-radius: 0 8px 10px 0; background: linear-gradient(#2c7c2c, #68b868 12%, #3c983c 30%, #3c9c3c 80%, #2c742c); font: italic bold 14px/18px "Liberation Sans", sans-serif; text-shadow: 1px 1px 1px #143c14; }
.start svg { width: 17px; height: 15px; }
.dots { width: 4px; height: 16px; margin: 3px 6px 0 8px; background: radial-gradient(circle, #14389c 1px, transparent 1px) 0 0 / 4px 4px; }
.quick { display: flex; gap: 5px; padding-top: 3px; margin-right: 30px; }
.quick svg { width: 13px; height: 13px; }
.tasks { flex: 1; display: flex; gap: 3px; margin-top: 3px; }
.tasks button { flex: 0 1 83px; min-width: 0; height: 21px; padding-left: 6px; gap: 3px; border-radius: 2px; background: linear-gradient(#6ca4fc, #3c80f4 20%, #3878ec); overflow: hidden; }
.tasks .active { background: #1c4cb4; }
.tasks svg { width: 13px; height: 13px; }
.lang { width: 16px; margin-top: 3px; }
.tray { align-self: stretch; display: flex; align-items: center; gap: 2px; padding: 3px 9px 0 0; background: linear-gradient(#1878d8, #20b0f8 12%, #1494ec 30%, #128ce4 80%, #0c68b8); }
.tray svg { width: 13px; height: 13px; }
.chev { margin-left: -6px; }
.tray time { margin-left: 4px; }
```
